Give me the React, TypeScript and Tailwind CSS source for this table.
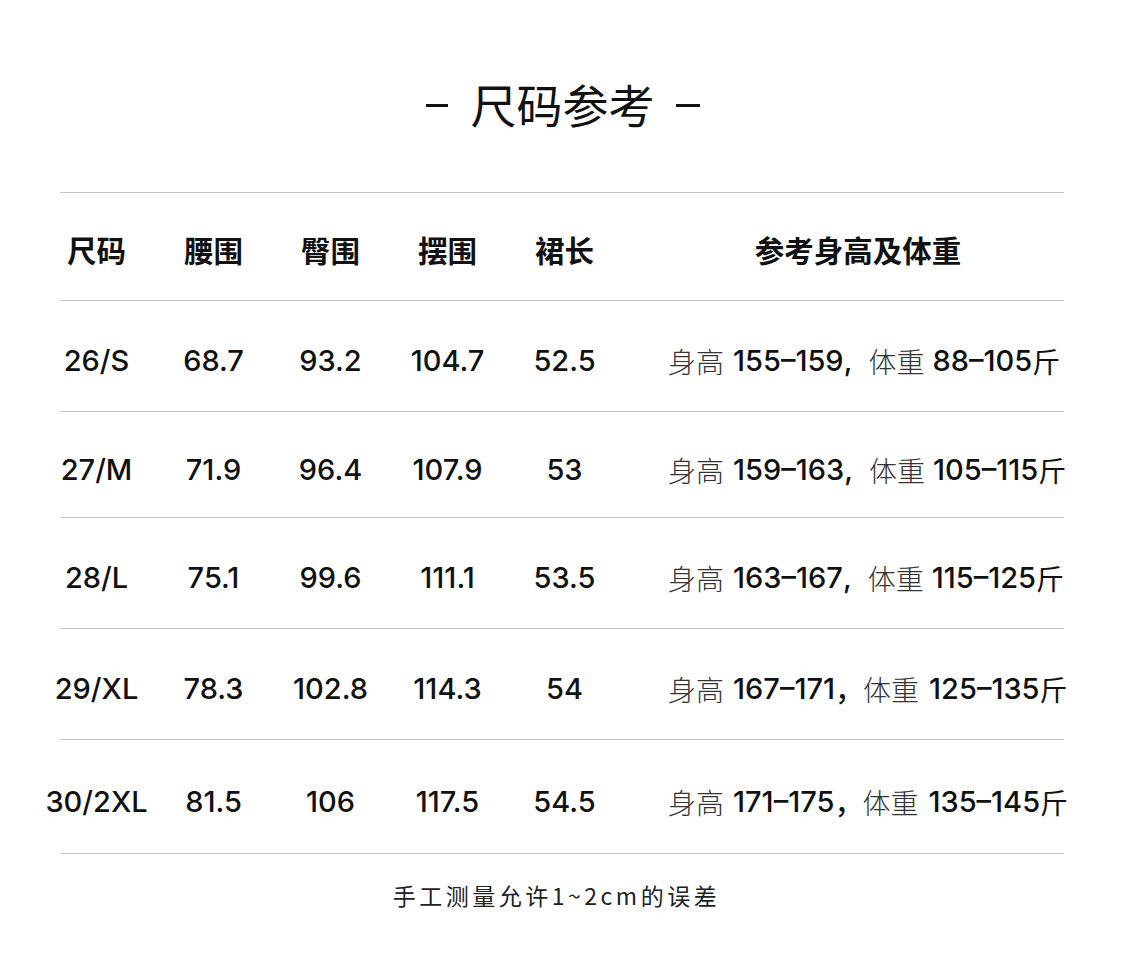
import React from "react";

const cjk = '"Noto Sans CJK SC", "Noto Sans", sans-serif';
const num = 'Inter, "Noto Sans CJK SC", sans-serif';

type Row = {
  size: string;
  waist: string;
  hip: string;
  hem: string;
  len: string;
  h: string;
  w: string;
  full: boolean;
  height: string;
};

const rows: Row[] = [
  { size: "26/S", waist: "68.7", hip: "93.2", hem: "104.7", len: "52.5", h: "155–159", w: "88–105", full: false, height: "h-[110px]" },
  { size: "27/M", waist: "71.9", hip: "96.4", hem: "107.9", len: "53", h: "159–163", w: "105–115", full: false, height: "h-[105px]" },
  { size: "28/L", waist: "75.1", hip: "99.6", hem: "111.1", len: "53.5", h: "163–167", w: "115–125", full: false, height: "h-[110px]" },
  { size: "29/XL", waist: "78.3", hip: "102.8", hem: "114.3", len: "54", h: "167–171", w: "125–135", full: true, height: "h-[110px]" },
  { size: "30/2XL", waist: "81.5", hip: "106", hem: "117.5", len: "54.5", h: "171–175", w: "135–145", full: true, height: "h-[113px]" },
];

function Cell({ children }: { children: React.ReactNode }) {
  return <div className="w-[117px] shrink-0 flex items-center justify-center whitespace-nowrap">{children}</div>;
}

export default function App() {
  return (
    <div className="w-[1125px] h-[975px] bg-white text-[#111] overflow-hidden">
      <div className="h-[192px] flex items-center justify-center pt-[14px]">
        <div className="flex items-center text-[46px] leading-[56px] font-normal text-[#111]" style={{ fontFamily: cjk }}>
          <span className="inline-block w-[22px] h-[3px] bg-[#111] mr-[23px] mt-[4px]" />
          <span>尺码参考</span>
          <span className="inline-block w-[24px] h-[3px] bg-[#111] ml-[21px] mt-[4px]" />
        </div>
      </div>
      <div className="ml-[60px] w-[1004px]">
        <div className="border-t border-[#c4c4c4]" />
        <div className="h-[107px] w-[1090px] flex items-center ml-[-22px] text-[29.5px] font-bold pt-[6px]" style={{ fontFamily: cjk }}>
          <Cell>尺码</Cell>
          <Cell>腰围</Cell>
          <Cell>臀围</Cell>
          <Cell>摆围</Cell>
          <Cell>裙长</Cell>
          <div className="w-[470px] shrink-0 flex justify-center whitespace-nowrap">参考身高及体重</div>
        </div>
        {rows.map((r) => (
          <React.Fragment key={r.size}>
            <div className="border-t border-[#c4c4c4]" />
            <div className={`${r.height} w-[1090px] flex items-center ml-[-22px] text-[29px] font-medium pt-[10px]`} style={{ fontFamily: num }}>
              <Cell>{r.size}</Cell>
              <Cell>{r.waist}</Cell>
              <Cell>{r.hip}</Cell>
              <Cell>{r.hem}</Cell>
              <Cell>{r.len}</Cell>
              <div className="w-[470px] shrink-0 flex items-center pl-[45px] whitespace-nowrap">
                <span className="font-light text-[#333] text-[28px]" style={{ fontFamily: cjk }}>身高</span>
                <span className="ml-[9px]">{r.h}</span>
                {r.full ? (
                  <span className="text-[28px]" style={{ fontFamily: cjk }}>，</span>
                ) : (
                  <span className="mr-[16px]">,</span>
                )}
                <span className="font-light text-[#333] text-[28px]" style={{ fontFamily: cjk }}>体重</span>
                <span className={r.full ? "ml-[10px]" : "ml-[8px]"}>{r.w}</span>
                <span className="font-normal text-[28px]" style={{ fontFamily: cjk }}>斤</span>
              </div>
            </div>
          </React.Fragment>
        ))}
        <div className="border-t border-[#c4c4c4]" />
      </div>
      <div className="flex justify-center pt-[26px] pr-[12px]">
        <div className="text-[23px] leading-[30px] text-[#222] tracking-[3.5px]" style={{ fontFamily: cjk }}>
          手工测量允许1~2cm的误差
        </div>
      </div>
    </div>
  );
}
